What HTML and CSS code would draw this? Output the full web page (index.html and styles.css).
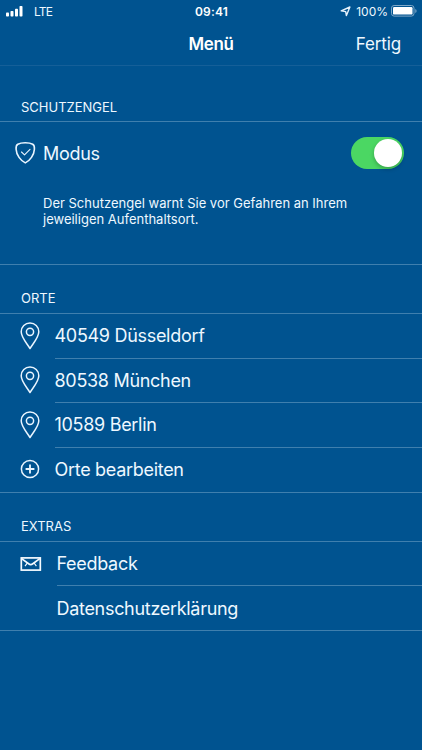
FILE: index.html
```html
<!DOCTYPE html>
<html lang="de">
<head>
    <meta charset="UTF-8">
    <meta name="viewport" content="width=device-width, initial-scale=1.0">
    <title>Menü</title>
    <link rel="stylesheet" href="styles.css">
</head>
<body>
    <div class="status-bar">
        <div class="status-left">
            <svg class="signal" width="17" height="11" viewBox="0 0 17 11" fill="#fff">
                <rect x="0" y="6.6" width="3" height="4" rx="0.8"/>
                <rect x="4.5" y="5" width="3" height="5.6" rx="0.8"/>
                <rect x="9" y="2.7" width="3" height="7.9" rx="0.8"/>
                <rect x="13.5" y="0" width="3" height="10.6" rx="0.8"/>
            </svg>
            <span class="carrier">LTE</span>
        </div>
        <span class="clock">09:41</span>
        <div class="status-right">
            <svg class="location" width="11" height="11" viewBox="0 0 11 11" fill="none" stroke="#e6f2fb" stroke-width="1.4" stroke-linejoin="round">
                <path d="M9.9 1L6.4 9.6L5.7 5.6L1.2 4.9Z"/>
            </svg>
            <span class="percent">100%</span>
            <svg class="battery" width="26" height="12" viewBox="0 0 26 12">
                <rect x="0.5" y="0.5" width="22.5" height="10.6" rx="2.6" fill="none" stroke="#7fa8c8"/>
                <rect x="2" y="2" width="19.5" height="7.6" rx="1.2" fill="#fff"/>
                <path d="M24.3 4v4c1.7-.6 1.7-3.4 0-4z" fill="#7fa8c8"/>
            </svg>
        </div>
    </div>

    <header class="nav-bar">
        <h1 class="nav-title">Menü</h1>
        <a class="done">Fertig</a>
    </header>

    <h2 class="section-title first">SCHUTZENGEL</h2>
    <section class="mode">
        <div class="mode-row">
            <svg class="shield" width="22" height="24" viewBox="0 0 22 24" fill="none" stroke="#e9f5ff" stroke-width="1.6" stroke-linejoin="round" stroke-linecap="round">
                <path d="M11.3 1.8C14.5 1.8 16.8 2.2 18.7 3.3C20.3 4.2 20.6 5.6 20.4 8.2C20.1 14 16 19.6 11.3 21.9C6.6 19.6 2.4 14 2.1 8.2C1.9 5.6 2.2 4.2 3.8 3.3C5.7 2.2 8 1.8 11.3 1.8Z"/>
                <path d="M7.5 11l3 2.8l5.5-5.4" stroke-width="1.1"/>
            </svg>
            <span class="label">Modus</span>
            <div class="switch"><div class="knob"></div></div>
        </div>
        <p class="hint">Der Schutzengel warnt Sie vor Gefahren an Ihrem<br>jeweiligen Aufenthaltsort.</p>
    </section>

    <h2 class="section-title">ORTE</h2>
    <ul class="list">
        <li class="row">
            <svg class="icon" width="20" height="28" viewBox="0 0 20 28" fill="none" stroke="#e9f5ff" stroke-width="1.5">
                <path d="M10 26.5C7 21.5 1.2 15.5 1.2 9.8a8.8 8.8 0 0 1 17.6 0C18.8 15.5 13 21.5 10 26.5Z" stroke-linejoin="round"/>
                <circle cx="10" cy="9.8" r="3.6"/>
            </svg>
            <span class="label">40549 Düsseldorf</span>
        </li>
        <li class="row">
            <svg class="icon" width="20" height="28" viewBox="0 0 20 28" fill="none" stroke="#e9f5ff" stroke-width="1.5">
                <path d="M10 26.5C7 21.5 1.2 15.5 1.2 9.8a8.8 8.8 0 0 1 17.6 0C18.8 15.5 13 21.5 10 26.5Z" stroke-linejoin="round"/>
                <circle cx="10" cy="9.8" r="3.6"/>
            </svg>
            <span class="label">80538 München</span>
        </li>
        <li class="row">
            <svg class="icon" width="20" height="28" viewBox="0 0 20 28" fill="none" stroke="#e9f5ff" stroke-width="1.5">
                <path d="M10 26.5C7 21.5 1.2 15.5 1.2 9.8a8.8 8.8 0 0 1 17.6 0C18.8 15.5 13 21.5 10 26.5Z" stroke-linejoin="round"/>
                <circle cx="10" cy="9.8" r="3.6"/>
            </svg>
            <span class="label">10589 Berlin</span>
        </li>
        <li class="row">
            <svg class="icon" width="20" height="20" viewBox="0 0 20 20" fill="none" stroke="#e9f5ff">
                <circle cx="10" cy="10" r="8.6" stroke-width="1.5"/>
                <path d="M10 5.6v8.8M5.6 10h8.8" stroke-width="1.8"/>
            </svg>
            <span class="label">Orte bearbeiten</span>
        </li>
    </ul>

    <h2 class="section-title">EXTRAS</h2>
    <ul class="list extras">
        <li class="row">
            <svg class="icon" width="22" height="14" viewBox="0 0 22 14" fill="none" stroke="#f4faff">
                <rect x="1.3" y="0.9" width="19" height="12.2" stroke-width="1.7"/>
                <path d="M1.6 1.6L8.6 6.8C10 7.8 11.4 7.8 12.8 6.8L19.8 1.6" stroke-width="1.7"/>
                <path d="M7.2 6.2L5 9.2M14.2 6.2L16.4 9.2" stroke-width="1.1"/>
            </svg>
            <span class="label">Feedback</span>
        </li>
        <li class="row">
            <span class="label">Datenschutzerklärung</span>
        </li>
    </ul>
</body>
</html>
```

FILE: styles.css
```css
* {
    box-sizing: border-box;
}
body {
    margin: 0;
    min-height: 750px;
    background: #005390;
    color: #eef8ff;
    font-family: Inter, "Liberation Sans", sans-serif;
    overflow: hidden;
}
svg {
    display: block;
    flex: none;
}
span, a {
    white-space: nowrap;
}

/* Status bar */
.status-bar {
    display: grid;
    grid-template-columns: 1fr auto 1fr;
    align-items: center;
    height: 22px;
    padding: 0 5px 0 6px;
    font-size: 12px;
}
.status-left {
    display: flex;
    align-items: center;
    gap: 11px;
}
.carrier {
    letter-spacing: -0.8px;
    font-size: 12px;
}
.status-right {
    display: flex;
    align-items: center;
    justify-content: flex-end;
}
.clock {
    font-weight: 600;
    letter-spacing: 0.2px;
    color: #fff;
}
.percent {
    margin: 0 3px 0 5px;
}

/* Navigation */
.nav-bar {
    display: grid;
    grid-template-columns: 1fr auto 1fr;
    align-items: center;
    height: 44px;
    padding: 0 21px;
    border-bottom: 1px solid #155f98;
}
.nav-title {
    grid-column: 2;
    margin: 0;
    font-size: 17px;
    font-weight: 600;
    letter-spacing: -0.4px;
    color: #fff;
}
.done {
    justify-self: end;
    font-size: 17px;
    letter-spacing: -0.15px;
}

/* Sections */
.section-title {
    display: flex;
    align-items: flex-end;
    height: 49px;
    margin: 0;
    padding: 0 21px 7px;
    border-bottom: 1px solid #3f7fae;
    font-size: 13px;
    line-height: 16px;
    font-weight: 400;
}
.section-title.first {
    height: 56px;
    padding-bottom: 6px;
}
.mode {
    height: 143px;
    border-bottom: 1px solid #3f7fae;
}
.mode-row {
    display: flex;
    align-items: center;
    height: 62px;
    padding: 0 18px 0 14px;
}
.label {
    font-size: 18px;
    line-height: 24px;
    letter-spacing: -0.3px;
}
.mode-row .label {
    margin-left: 7px;
    padding-top: 2px;
}
.switch {
    display: flex;
    justify-content: flex-end;
    width: 53px;
    height: 32px;
    margin-left: auto;
    padding: 2px;
    border-radius: 16px;
    background: #4bd763;
}
.knob {
    width: 28px;
    height: 28px;
    border-radius: 50%;
    background: #fff;
    box-shadow: 0 2px 4px rgba(0, 0, 0, 0.25);
}
.hint {
    margin: 12px 0 0 43px;
    font-size: 13px;
    line-height: 15.5px;
}

/* Lists */
.list {
    margin: 0;
    padding: 0;
    list-style: none;
    border-bottom: 1px solid #3f7fae;
}
.row {
    display: grid;
    grid-template-columns: 34.5px 1fr;
    align-items: center;
    height: 44.5px;
    padding-left: 20px;
}
.icon {
    margin-bottom: 1px;
}
.row .label {
    grid-column: 2;
    display: flex;
    align-items: center;
    height: 100%;
    padding-top: 1px;
}
.row:not(:last-child) .label {
    border-bottom: 1px solid #3f7fae;
}
.extras .row {
    grid-template-columns: 36.5px 1fr;
    height: 44.2px;
}
```
